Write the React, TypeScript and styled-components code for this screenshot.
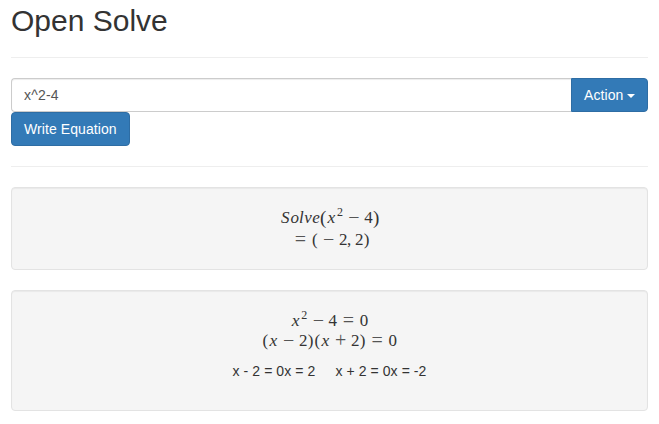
import React from "react";
import styled, { createGlobalStyle } from "styled-components";

const GlobalStyle = createGlobalStyle`
  *, *::before, *::after { box-sizing: border-box; }
  body {
    margin: 0;
    background: #fff;
    color: #333;
    font: 14px/20px "Liberation Sans", Arial, sans-serif;
    overflow: hidden;
  }
`;

const Page = styled.main`
  padding: 1px 11px 0;
`;

const Title = styled.h1`
  margin: 0;
  height: 56px;
  font-size: 30px;
  line-height: 40px;
  font-weight: 400;
`;

const Divider = styled.hr`
  margin: 0 0 20px;
  border: 0;
  border-top: 1px solid #eee;
`;

const InputGroup = styled.div`
  display: flex;
  height: 34px;
`;

const EquationInput = styled.input`
  flex: 1;
  min-width: 0;
  padding: 6px 12px;
  border: 1px solid #ccc;
  border-right: 0;
  border-radius: 4px 0 0 4px;
  box-shadow: inset 0 1px 1px rgba(0, 0, 0, 0.075);
  color: #555;
  font: inherit;
  letter-spacing: 0.2px;
  outline: none;
`;

const Button = styled.button<{ $attached?: boolean }>`
  display: inline-flex;
  align-items: center;
  justify-content: flex-start;
  width: ${(p) => (p.$attached ? 77 : 119)}px;
  height: 34px;
  padding: 0 0 0 12px;
  border: 1px solid #2e6da4;
  border-radius: ${(p) => (p.$attached ? "0 4px 4px 0" : "4px")};
  background: #337ab7;
  color: #fff;
  font: inherit;
  letter-spacing: 0.08px;
  white-space: nowrap;
`;

const Caret = styled.span`
  margin: 1px 0 0 4px;
  border-top: 4px solid #fff;
  border-left: 4px solid transparent;
  border-right: 4px solid transparent;
`;

const Actions = styled.div`
  display: flex;
  margin-bottom: 20px;
`;

const Well = styled.section<{ $height: number }>`
  display: flex;
  flex-direction: column;
  align-items: center;
  height: ${(p) => p.$height}px;
  margin-bottom: 20px;
  padding-top: 19px;
  border: 1px solid #e3e3e3;
  border-radius: 4px;
  background: #f5f5f5;
  box-shadow: inset 0 1px 1px rgba(0, 0, 0, 0.05);
`;

const Formula = styled.div<{ $height: number }>`
  display: flex;
  height: ${(p) => p.$height}px;
  font-family: "Liberation Serif", "Times New Roman", serif;
  font-size: 16.94px;
  line-height: 21px;
  white-space: pre;
`;

const Symbol = styled.span<{ $width: number; $size?: number }>`
  display: flex;
  justify-content: center;
  width: ${(p) => p.$width * 16.94}px;
  font-size: ${(p) => p.$size ?? 16.94}px;
`;

const Variable = styled(Symbol)`
  font-style: italic;
`;

const Operator = styled(Symbol)<{ $gap: number }>`
  margin: 0 ${(p) => p.$gap}em;

  span {
    color: #555;
    font-size: 20px;
  }
`;

const Exponent = styled.sup`
  width: 7.4px;
  font-size: 12px;
  line-height: 8px;
  padding-top: 1px;
  text-align: center;
`;

const Factors = styled.div`
  display: flex;
  gap: 20px;
  margin-top: 11px;
  letter-spacing: 0.08px;
`;

const Digit = ({ children }: { children: string }) => <Symbol $width={0.5}>{children}</Symbol>;
const Paren = ({ children, size = 17 }: { children: string; size?: number }) => (
  <Symbol $width={0.389} $size={size}>{children}</Symbol>
);
const X = () => <Variable $width={0.572} $size={17.5}>x</Variable>;
const Binary = ({ children }: { children: string }) => (
  <Operator $width={0.778} $gap={0.222}><span>{children}</span></Operator>
);
const Equals = () => <Operator $width={0.778} $gap={0.278}><span>=</span></Operator>;

const solveLetters: [string, number][] = [["S", 0.65], ["o", 0.485], ["l", 0.298], ["v", 0.485], ["e", 0.466]];

export default function App() {
  return (
    <>
      <GlobalStyle />
      <Page>
        <Title>Open Solve</Title>
        <Divider />
        <InputGroup>
          <EquationInput aria-label="Equation" defaultValue="x^2-4" />
          <Button $attached>Action<Caret /></Button>
        </InputGroup>
        <Actions><Button>Write Equation</Button></Actions>
        <Divider />
        <Well $height={83}>
          <Formula $height={22}>
            {solveLetters.map(([letter, width]) => (
              <Variable key={letter} $width={width} $size={17}>{letter}</Variable>
            ))}
            <Paren size={19}>(</Paren><X /><Exponent>2</Exponent><Binary>−</Binary><Digit>4</Digit><Paren size={19}>)</Paren>
          </Formula>
          <Formula $height={20}>
            <Equals /><Paren>(</Paren><Binary>−</Binary><Digit>2</Digit>
            <Symbol $width={0.445}>, </Symbol><Digit>2</Digit><Paren>)</Paren>
          </Formula>
        </Well>
        <Well $height={121}>
          <Formula $height={20}>
            <X /><Exponent>2</Exponent><Binary>−</Binary><Digit>4</Digit><Equals /><Digit>0</Digit>
          </Formula>
          <Formula $height={20}>
            <Paren>(</Paren><X /><Binary>−</Binary><Digit>2</Digit><Paren>)</Paren>
            <Paren>(</Paren><X /><Binary>+</Binary><Digit>2</Digit><Paren>)</Paren>
            <Equals /><Digit>0</Digit>
          </Formula>
          <Factors>
            <span>x - 2 = 0x = 2</span>
            <span>x + 2 = 0x = -2</span>
          </Factors>
        </Well>
      </Page>
    </>
  );
}
